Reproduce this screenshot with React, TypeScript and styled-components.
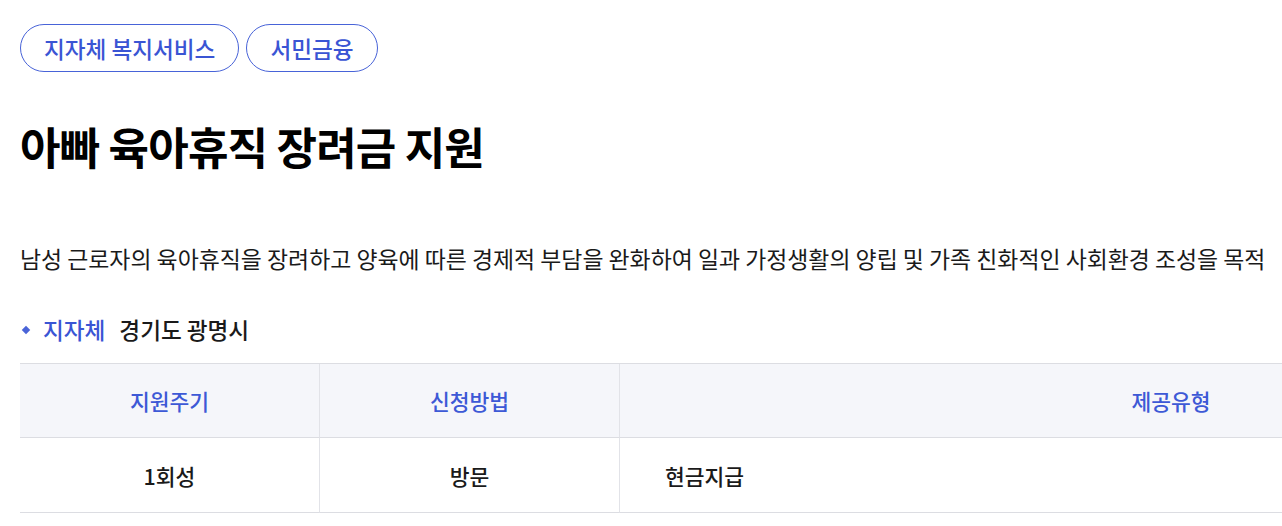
import React from "react";
import styled, { createGlobalStyle } from "styled-components";

const GlobalStyle = createGlobalStyle`
  html, body {
    margin: 0;
    padding: 0;
    background: #fff;
    overflow: hidden;
  }
  body {
    font-family: "Noto Sans CJK KR", "Noto Sans", sans-serif;
    color: #111;
  }
`;

const Page = styled.div`
  padding: 24px 0 0 20px;
  width: 1262px;
  overflow: hidden;
`;

const TagRow = styled.div`
  display: flex;
  gap: 7px;
`;

const Tag = styled.span`
  display: inline-flex;
  align-items: center;
  height: 46px;
  padding: 0 23px;
  border: 1px solid #4863d8;
  border-radius: 24px;
  color: #3a55d4;
  font-size: 22.6px;
  font-weight: 500;
`;

const Title = styled.h1`
  margin: 48px 0 0;
  font-size: 44px;
  font-weight: 700;
  line-height: 52px;
  letter-spacing: -0.8px;
  color: #000;
`;

const Description = styled.p`
  margin: 70px 0 0;
  font-size: 22.9px;
  line-height: 32px;
  color: #1a1a1a;
  white-space: nowrap;
`;

const InfoLine = styled.div`
  display: flex;
  align-items: center;
  margin-top: 40px;
  font-size: 22.6px;
  line-height: 32px;
`;

const Diamond = styled.span`
  width: 6px;
  height: 6px;
  margin: 0 14px 0 3px;
  background: #4a64d8;
  transform: rotate(45deg);
`;

const InfoLabel = styled.span`
  color: #3a55d4;
  font-weight: 500;
  margin-right: 14px;
`;

const InfoValue = styled.span`
  color: #1a1a1a;
  font-weight: 500;
`;

const Table = styled.div`
  margin-top: 17px;
  width: 1702px;
  display: grid;
  grid-template-columns: 300px 300px 1102px;
  border-top: 1px solid #dcdde2;
`;

const HeadCell = styled.div<{ $last?: boolean }>`
  height: 73px;
  display: flex;
  align-items: center;
  justify-content: center;
  background: #f5f6fa;
  color: #3d59d6;
  font-size: 21.5px;
  font-weight: 500;
  border-bottom: 1px solid #dcdde2;
  border-right: ${(p) => (p.$last ? "none" : "1px solid #e2e3e8")};
`;

const BodyCell = styled.div<{ $left?: boolean; $last?: boolean }>`
  height: 74px;
  display: flex;
  align-items: center;
  justify-content: ${(p) => (p.$left ? "flex-start" : "center")};
  padding-left: ${(p) => (p.$left ? "45px" : "0")};
  color: #1a1a1a;
  font-size: 21.5px;
  font-weight: 500;
  border-bottom: 1px solid #dcdde2;
  border-right: ${(p) => (p.$last ? "none" : "1px solid #e2e3e8")};
`;

const App = () => {
  return (
    <Page>
      <GlobalStyle />
      <TagRow>
        <Tag>지자체 복지서비스</Tag>
        <Tag>서민금융</Tag>
      </TagRow>
      <Title>아빠 육아휴직 장려금 지원</Title>
      <Description>
        남성 근로자의 육아휴직을 장려하고 양육에 따른 경제적 부담을 완화하여 일과 가정생활의 양립 및 가족 친화적인 사회환경 조성을 목적
      </Description>
      <InfoLine>
        <Diamond />
        <InfoLabel>지자체</InfoLabel>
        <InfoValue>경기도 광명시</InfoValue>
      </InfoLine>
      <Table>
        <HeadCell>지원주기</HeadCell>
        <HeadCell>신청방법</HeadCell>
        <HeadCell $last>제공유형</HeadCell>
        <BodyCell>1회성</BodyCell>
        <BodyCell>방문</BodyCell>
        <BodyCell $left $last>현금지급</BodyCell>
      </Table>
    </Page>
  );
};

export default App;
